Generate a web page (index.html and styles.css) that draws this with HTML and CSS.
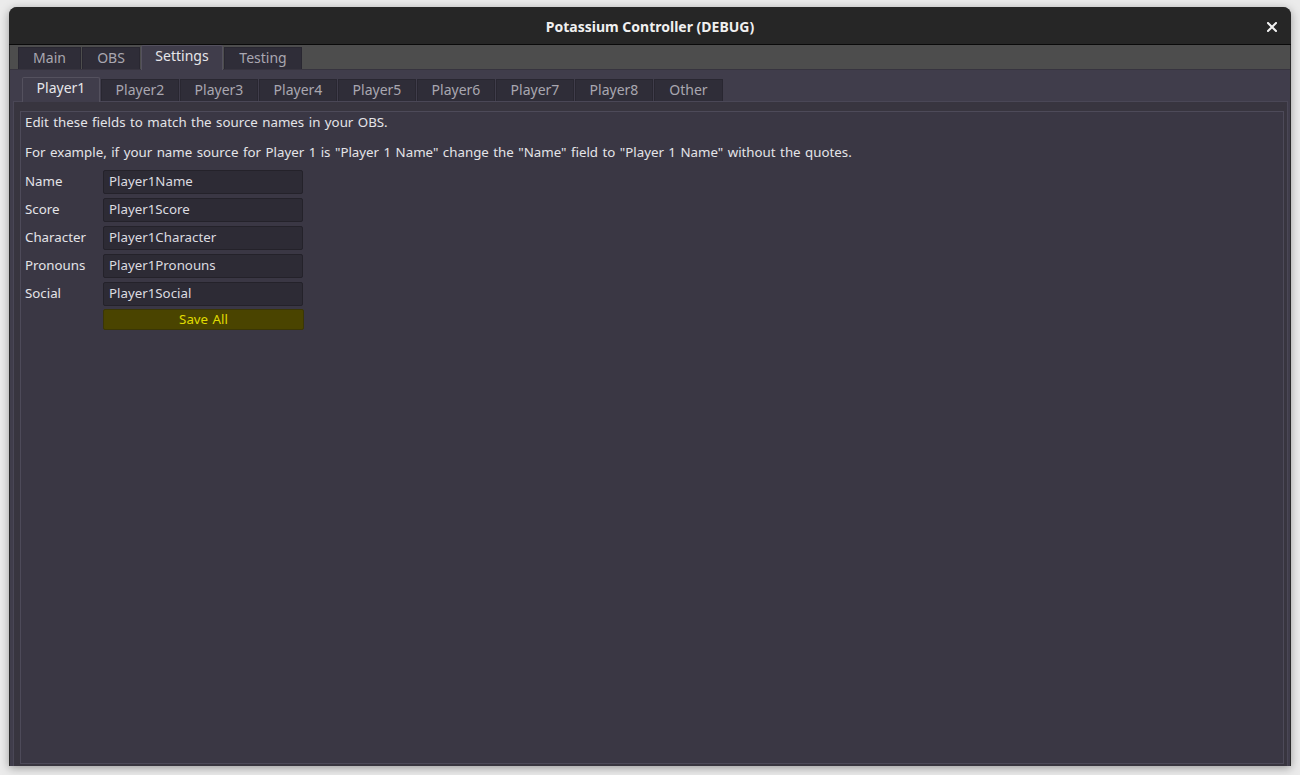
FILE: index.html
```html
<!DOCTYPE html>
<html>
<head>
<meta charset="utf-8">
<title>Potassium Controller (DEBUG)</title>
<link rel="stylesheet" href="styles.css">
</head>
<body>
<div class="window">
  <div class="titlebar">
    <span class="title">Potassium Controller (DEBUG)</span>
    <span class="close">
      <svg width="10" height="10" viewBox="0 0 10 10"><path d="M1 1L9 9M9 1L1 9" stroke="#f2f2f2" stroke-width="2" stroke-linecap="square"/></svg>
    </span>
  </div>
  <div class="main">
    <div class="tabbar top">
      <div class="tab">Main</div>
      <div class="tab">OBS</div>
      <div class="tab active">Settings</div>
      <div class="tab">Testing</div>
    </div>
    <div class="panel">
      <div class="tabbar inner">
        <div class="tab active">Player1</div>
        <div class="tab">Player2</div>
        <div class="tab">Player3</div>
        <div class="tab">Player4</div>
        <div class="tab">Player5</div>
        <div class="tab">Player6</div>
        <div class="tab">Player7</div>
        <div class="tab">Player8</div>
        <div class="tab other">Other</div>
      </div>
      <div class="subpanel">
        <div class="content">
          <p class="line first">Edit these fields to match the source names in your OBS.</p>
          <p class="line second">For example, if your name source for Player 1 is "Player 1 Name" change the "Name" field to "Player 1 Name" without the quotes.</p>
          <div class="form">
            <label class="lbl">Name</label><div class="field">Player1Name</div>
            <label class="lbl">Score</label><div class="field">Player1Score</div>
            <label class="lbl">Character</label><div class="field">Player1Character</div>
            <label class="lbl">Pronouns</label><div class="field">Player1Pronouns</div>
            <label class="lbl">Social</label><div class="field">Player1Social</div>
            <span></span><div class="save">Save All</div>
          </div>
        </div>
      </div>
    </div>
  </div>
</div>
</body>
</html>
```
FILE: styles.css
```css
html, body {
  margin: 0;
  padding: 0;
  height: 100%;
}
body {
  background: #ebebeb;
  font-family: "Noto Sans", "Open Sans", sans-serif;
  font-size: 13.3px;
  word-spacing: 1px;
  overflow: hidden;
}
.window {
  margin: 7px 9px 0 9px;
  width: 1282px;
  height: 759px;
  border-radius: 8px 8px 0 0;
  overflow: hidden;
  display: flex;
  flex-direction: column;
  box-shadow: 0 2px 10px rgba(0,0,0,0.35);
  background: #4d4d4d;
}
.titlebar {
  box-sizing: border-box;
  height: 38px;
  padding-top: 2px;
  background: #262626;
  border-bottom: 1px solid #0a0a0a;
  display: flex;
  align-items: center;
  justify-content: center;
  position: relative;
  color: #f0f0f0;
}
.title {
  font-weight: bold;
  font-size: 14px;
  word-spacing: 0;
}
.close {
  position: absolute;
  right: 14px;
  top: 15px;
  width: 10px;
  height: 10px;
  display: flex;
}
.main {
  flex: 1;
  display: flex;
  flex-direction: column;
  background: #4d4d4d;
  border-left: 1px solid #2a2a2a;
  border-right: 1px solid #2a2a2a;
}
.tabbar {
  display: flex;
  align-items: flex-end;
  gap: 1px;
}
.tabbar.top {
  height: 24px;
  padding-left: 8px;
  background: #4d4d4d;
}
.tab {
  box-sizing: border-box;
  height: 22px;
  padding: 0 10px 2px;
  background: #2f2d38;
  border: 1px solid #292731;
  border-bottom: none;
  color: #a9a7b0;
  display: flex;
  align-items: center;
  justify-content: center;
  line-height: 1;
  font-size: 14px;
  word-spacing: 0;
}
.tab.active {
  height: 25px;
  background: #403d4b;
  border: 1px solid #54515e;
  border-bottom: none;
  color: #e6e6ea;
  border-radius: 2px 2px 0 0;
  margin-bottom: -1px;
  position: relative;
  padding-bottom: 4px;
}
.tabbar.top .tab:nth-child(1) { width: 63px; }
.tabbar.top .tab:nth-child(2) { width: 58px; }
.tabbar.top .tab:nth-child(3) { width: 82px; }
.tabbar.top .tab:nth-child(4) { width: 78px; }
.panel {
  flex: 1;
  background: #403d4b;
  border-top: 1px solid #37343f;
  padding: 7px 2px 0 3px;
  display: flex;
  flex-direction: column;
}
.tabbar.inner {
  height: 24px;
  padding-left: 9px;
}
.tabbar.inner .tab {
  width: 78px;
  height: 22px;
}
.tabbar.inner .tab.active {
  height: 25px;
}
.tabbar.inner .tab.other { width: 69px; }
.subpanel {
  flex: 1;
  background: #38353f;
  border: 1px solid #4a4756;
  border-bottom: none;
  padding: 9px 3px 0 6px;
  display: flex;
}
.content {
  flex: 1;
  background: #3a3744;
  border: 1px solid #4d4a59;
  padding: 0 4px;
  color: #e4e4e8;
  margin-bottom: 2px;
}
.line {
  margin: 0;
  line-height: 20px;
}
.second { margin-top: 10px; }
.form {
  margin-top: 8px;
  display: grid;
  grid-template-columns: 78px 200px;
  row-gap: 4px;
  align-items: center;
}
.lbl {
  line-height: 22px;
  padding-bottom: 2px;
}
.field {
  box-sizing: border-box;
  height: 24px;
  background: #2d2b35;
  border: 1px solid #24222a;
  border-radius: 2px;
  padding-left: 5px;
  line-height: 20px;
  color: #dcdce0;
}
.save {
  box-sizing: border-box;
  height: 21px;
  width: 201px;
  margin-top: -1px;
  background: #4a4400;
  border: 1px solid #3a3606;
  border-radius: 2px;
  color: #e0dc00;
  text-align: center;
  line-height: 19px;
}
```
